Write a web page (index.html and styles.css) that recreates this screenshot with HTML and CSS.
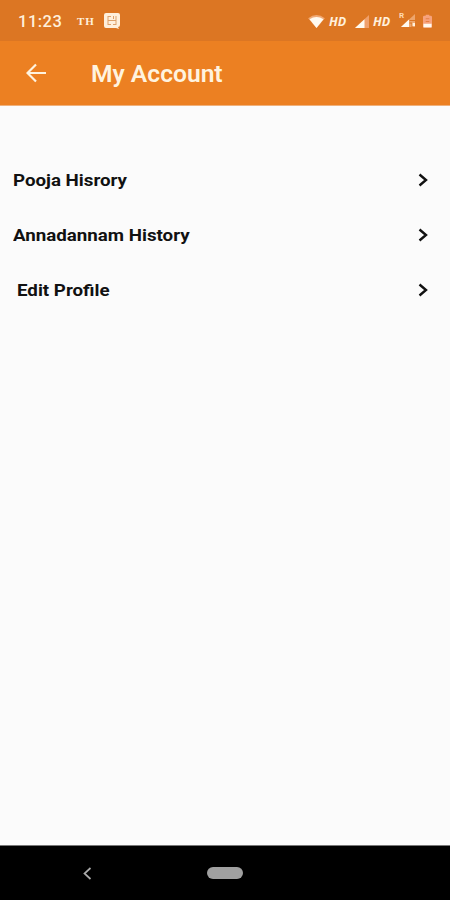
FILE: index.html
```
<!DOCTYPE html>
<html lang="en">
<head>
  <meta charset="UTF-8">
  <meta name="viewport" content="width=device-width, initial-scale=1.0">
  <title>My Account</title>
  <link rel="stylesheet" href="styles.css">
</head>
<body>

  <!-- Status bar -->
  <div class="status-bar">
    <span class="time">11:23</span>
    <span class="th">TH</span>
    <svg class="notice" width="16" height="16" viewBox="0 0 16 16">
      <path d="M2 0h12q2 0 2 2v10q0 2-2 2l1 2-3-1H2q-2 0-2-2V2q0-2 2-2z" fill="#fff0dc"/>
      <path d="M4 3v9M4 3.5h3M4 7.5h8M4 11.5h3M9.5 3v3M12 3v9M9 11.5h3" fill="none" stroke="#dda16b" stroke-width="1"/>
    </svg>
    <div class="status-icons">
      <svg class="wifi" width="17" height="13" viewBox="0 0 18 14">
        <path d="M0 3.5Q9-3.5 18 3.5L9 14z" fill="#f0a974"/>
        <path d="M1.500 4.500Q9 0 16.500 4.500L9 14z" fill="#fffaf0"/>
      </svg>
      <span class="hd">HD</span>
      <svg class="signal" width="14" height="13" viewBox="0 0 14 13">
        <path d="M14 0v13H0z" fill="#f0a06c"/>
        <path d="M9.5 4.2V13H0z" fill="#fffaf0"/>
      </svg>
      <span class="hd">HD</span>
      <svg class="roaming" width="17" height="17" viewBox="0 0 17 17">
        <text x="0" y="7" class="roaming-label">R</text>
        <path d="M16 3v13H2z" fill="#eda56c"/>
        <path d="M10 8.500V16H2z" fill="#fffaf0"/>
        <path d="M10.500 9.500H16M10.500 12H13v4" fill="none" stroke="#dc7623" stroke-width="1"/>
        <path d="M13.5 12H16v3h-2.500z" fill="#fff0dc"/>
      </svg>
      <svg class="battery" width="9" height="15" viewBox="0 0 10 15">
        <path d="M3 0h4v1h1.500q1.500 0 1.500 1.500V13q0 1.500-1.500 1.500h-7Q0 14.500 0 13V2.500Q0 1 1.500 1H3z" fill="#f7a27c"/>
        <path d="M3 4.500h4M3 7.500h4" stroke="#e67f45" stroke-width="1.200"/>
        <path d="M.5 10h9v4h-9z" fill="#fffaf0"/>
      </svg>
    </div>
  </div>

  <!-- Title bar -->
  <header class="app-bar">
    <svg class="back" width="21" height="20" viewBox="0 0 21 20">
      <path d="M10 1.500L1.500 10L10 18.500M1.500 10H20" fill="none" stroke="#fff3df" stroke-width="2.200"/>
    </svg>
    <h1>My Account</h1>
  </header>

  <!-- Menu -->
  <main class="menu">
    <div class="row">
      <span class="label pooja">Pooja Hisrory</span>
      <svg class="arrow" width="10" height="14" viewBox="0 0 10 14">
        <path d="M1.500 1.500L8 7L1.500 12.500" fill="none" stroke="#111" stroke-width="2.400"/>
      </svg>
    </div>
    <div class="row">
      <span class="label annadannam">Annadannam History</span>
      <svg class="arrow" width="10" height="14" viewBox="0 0 10 14">
        <path d="M1.500 1.500L8 7L1.500 12.500" fill="none" stroke="#111" stroke-width="2.400"/>
      </svg>
    </div>
    <div class="row">
      <span class="label edit">Edit Profile</span>
      <svg class="arrow" width="10" height="14" viewBox="0 0 10 14">
        <path d="M1.500 1.500L8 7L1.500 12.500" fill="none" stroke="#111" stroke-width="2.400"/>
      </svg>
    </div>
  </main>

  <!-- System navigation -->
  <nav class="nav-bar">
    <svg class="nav-back" width="9" height="13" viewBox="0 0 9 13">
      <path d="M7.500 1L1.500 6.500L7.500 12" fill="none" stroke="#aaa" stroke-width="1.700"/>
    </svg>
    <div class="nav-home"></div>
  </nav>

</body>
</html>
```
FILE: styles.css
```
* {
  box-sizing: border-box;
}

body {
  margin: 0;
  height: 900px;
  display: flex;
  flex-direction: column;
  font-family: Roboto, "Liberation Sans", sans-serif;
  background: #fbfbfb;
  overflow: hidden;
}

svg {
  display: block;
  flex-shrink: 0;
}

.status-bar {
  height: 41px;
  padding: 1px 18px 0;
  display: flex;
  align-items: center;
  background: #dc7623;
  color: #fff0dc;
}

.time {
  width: 59px;
  font-size: 16.5px;
  font-weight: 500;
  letter-spacing: 0.5px;
}

.th {
  width: 27px;
  font-family: "Liberation Serif", serif;
  font-size: 11px;
  font-weight: bold;
  letter-spacing: 1px;
}

.status-icons {
  margin-left: auto;
  display: flex;
  align-items: center;
}

.hd {
  width: 19px;
  font-family: "Open Sans", sans-serif;
  font-size: 12.5px;
  font-weight: bold;
  font-style: italic;
}

.wifi {
  margin-right: 4px;
}

.signal {
  margin: 0 4px 0 7px;
}

.roaming {
  margin: -3px 7px 0 7px;
}

.roaming-label {
  font-size: 8px;
  font-weight: bold;
  fill: #ffd9b4;
}

.app-bar {
  height: 65px;
  padding-left: 26px;
  display: flex;
  align-items: center;
  background: #ec8022;
  border-bottom: 1px solid #efb17c;
}

.app-bar h1 {
  margin: 3px 0 0 44px;
  font-size: 23px;
  font-weight: 600;
  color: #fff3df;
  transform: scaleX(1.07);
  transform-origin: left center;
}

.menu {
  flex: 1;
  padding: 46px 22px 0 13px;
}

.row {
  height: 55.3px;
  display: flex;
  align-items: center;
  justify-content: space-between;
}

/* Labels are slightly extended */
.label {
  padding-top: 1px;
  font-size: 16px;
  font-weight: bold;
  color: #111;
  transform: scaleX(1.17);
  transform-origin: left center;
}

.edit {
  margin-left: 4px;
}

.nav-bar {
  height: 55px;
  padding-left: 83px;
  display: flex;
  align-items: center;
  background: #000;
  border-top: 1px solid #777;
}

.nav-home {
  width: 36px;
  height: 12px;
  margin-left: 115px;
  border-radius: 6px;
  background: #a0a0a0;
}
```
